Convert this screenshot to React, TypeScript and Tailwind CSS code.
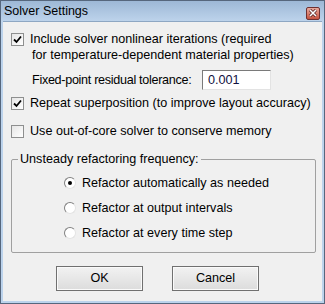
import React, { useState } from "react";

const font = { fontFamily: '"Liberation Sans", Arial, sans-serif' };

const CheckBox = ({ checked, onClick }: { checked: boolean; onClick: () => void }) => (
  <span
    onClick={onClick}
    className="flex h-[13px] w-[13px] shrink-0 items-center justify-center border border-[#8e8f8f] bg-gradient-to-br from-[#e6e6e6] to-white"
  >
    {checked && (
      <svg width="9" height="9" viewBox="0 0 9 9">
        <path d="M1 4.5 L3.5 7 L8 1.5" fill="none" stroke="#000" strokeWidth="1.8" />
      </svg>
    )}
  </span>
);

const Radio = ({ checked, onClick }: { checked: boolean; onClick: () => void }) => (
  <span
    onClick={onClick}
    className="flex h-[12px] w-[12px] shrink-0 items-center justify-center rounded-full border border-t-[#808080] border-l-[#808080] border-b-[#e3e3e3] border-r-[#e3e3e3] bg-white"
  >
    {checked && <span className="h-[4px] w-[4px] rounded-full bg-black" />}
  </span>
);

const App = () => {
  const [nonlinear, setNonlinear] = useState(true);
  const [repeat, setRepeat] = useState(true);
  const [outOfCore, setOutOfCore] = useState(false);
  const [refactor, setRefactor] = useState(0);
  const [tol, setTol] = useState("0.001");

  const radios = [
    "Refactor automatically as needed",
    "Refactor at output intervals",
    "Refactor at every time step",
  ];

  return (
    <div style={font} className="flex h-[304px] w-[325px] flex-col border border-[#56677d] bg-[#bcd3ec] text-[12.6px] text-black">
      {/* title bar */}
      <div className="flex h-[20px] items-center justify-between bg-gradient-to-b from-[#9db8d6] to-[#bdd3eb] pl-[3px] pr-[4px]">
        <span className="text-[12.5px]">Solver Settings</span>
        <span className="mt-[4px] flex h-[13px] w-[14px] items-center justify-center rounded-[2px] border border-[#6e3030] bg-gradient-to-b from-[#e9a99d] to-[#c4523f]">
          <svg width="8" height="8" viewBox="0 0 8 8">
            <path d="M1 1 L7 7 M7 1 L1 7" stroke="#4a1a1a" strokeWidth="3" />
            <path d="M1 1 L7 7 M7 1 L1 7" stroke="#fff" strokeWidth="1.6" />
          </svg>
        </span>
      </div>

      {/* client area */}
      <div className="mx-[2px] mb-[2px] flex flex-1 flex-col border-t border-[#8ea7c3] bg-[#f0f0f0] pl-[8px] pt-[9px]">
        <div className="flex items-start gap-[6px] leading-[16px]">
          <span className="mt-[2px]">
            <CheckBox checked={nonlinear} onClick={() => setNonlinear(!nonlinear)} />
          </span>
          <div>
            <div>Include solver nonlinear iterations (required</div>
            <div className="pl-[2px]">for temperature-dependent material properties)</div>
          </div>
        </div>

        <div className="mt-[7px] flex h-[20px] items-center pl-[21px]">
          <span className="w-[170px] shrink-0 whitespace-nowrap tracking-[-0.3px]">Fixed-point residual tolerance:</span>
          <input
            value={tol}
            onChange={(e) => setTol(e.target.value)}
            style={font}
            className="h-[20px] w-[69px] border border-t-[#7a7a7a] border-l-[#7a7a7a] border-b-[#e3e3e3] border-r-[#e3e3e3] bg-white pl-[5px] text-[12.6px] text-[#101040] outline-none"
          />
        </div>

        <div className="mt-[5px] flex h-[16px] items-center gap-[6px]">
          <CheckBox checked={repeat} onClick={() => setRepeat(!repeat)} />
          <span>Repeat superposition (to improve layout accuracy)</span>
        </div>

        <div className="mt-[12px] flex h-[16px] items-center gap-[6px]">
          <CheckBox checked={outOfCore} onClick={() => setOutOfCore(!outOfCore)} />
          <span>Use out-of-core solver to conserve memory</span>
        </div>

        <fieldset className="mt-[12px] w-[305px] rounded-[2px] border border-[#a0a0a0] pb-[11px]">
          <legend className="ml-[6px] px-[2px] leading-[16px]">Unsteady refactoring frequency:</legend>
          <div className="mt-[8px] flex flex-col gap-[9px] pl-[52px]">
            {radios.map((r, i) => (
              <div key={r} className="flex h-[16px] items-center gap-[6px]" onClick={() => setRefactor(i)}>
                <Radio checked={refactor === i} onClick={() => setRefactor(i)} />
                <span>{r}</span>
              </div>
            ))}
          </div>
        </fieldset>

        <div className="mt-[13px] flex gap-[29px] pl-[45px]">
          <button className="h-[25px] w-[87px] border border-[#707070] bg-gradient-to-b from-[#f2f2f2] to-[#dcdcdc] shadow-[inset_0_0_0_1px_#fafafa]">
            OK
          </button>
          <button className="h-[25px] w-[87px] border border-[#707070] bg-gradient-to-b from-[#f2f2f2] to-[#dcdcdc] shadow-[inset_0_0_0_1px_#fafafa]">
            Cancel
          </button>
        </div>
      </div>
    </div>
  );
};

export default App;
